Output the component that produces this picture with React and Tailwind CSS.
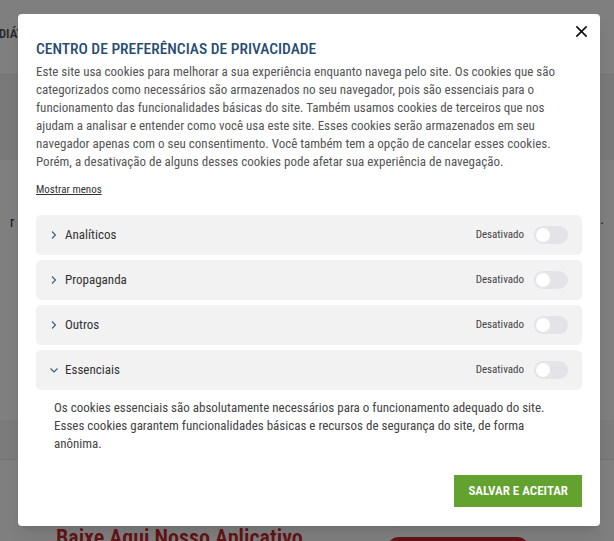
import { useState } from 'react';

const font = { fontFamily: '"Liberation Sans Narrow", "Roboto Condensed", Roboto, sans-serif' };

const categories = [
  { name: 'Analíticos', open: false },
  { name: 'Propaganda', open: false },
  { name: 'Outros', open: false },
  { name: 'Essenciais', open: true },
];

function Chevron({ open }) {
  return open ? (
    <svg width="10" height="10" viewBox="0 0 10 10" className="text-[#3d5a7a]">
      <path d="M1.5 3.5 L5 7 L8.5 3.5" fill="none" stroke="currentColor" strokeWidth="1.1" />
    </svg>
  ) : (
    <svg width="10" height="10" viewBox="0 0 10 10" className="text-[#3d5a7a]">
      <path d="M3 1.5 L6.5 5 L3 8.5" fill="none" stroke="currentColor" strokeWidth="1.1" />
    </svg>
  );
}

function Toggle() {
  const [on, setOn] = useState(false);
  return (
    <button
      onClick={() => setOn(!on)}
      className={`w-[34px] h-[18px] rounded-full p-[2px] flex ${on ? 'bg-[#63a22f] justify-end' : 'bg-[#e3e3e8] justify-start'}`}
    >
      <span className="w-[14px] h-[14px] rounded-full bg-white block" />
    </button>
  );
}

function Background() {
  return (
    <div className="w-full h-[541px] flex flex-col bg-white" style={font}>
      <div className="h-[75px] bg-white flex items-start border-b border-[#e5e5e5]">
        <span className="mt-[24px] text-[13px] text-[#555] ml-[-15px] font-semibold">PEDIÁTRICO</span>
      </div>
      <div className="h-[85px] bg-[#f3f3f3]" />
      <div className="h-[185px] bg-white flex items-start justify-between px-[10px] pt-[52px]">
        <span className="text-[14px] text-[#333]">r</span>
        <span className="text-[14px] text-[#333] mt-[-3px]">a.</span>
      </div>
      <div className="h-[75px] bg-white" />
      <div className="h-[40px] bg-[#f7f7f7] border-b border-[#e5e5e5]" />
      <div className="flex-1 bg-white flex justify-between items-end pl-[56px] pr-[86px]">
        <span className="text-[22px] font-semibold text-[#c8262b] leading-[26px] mb-[-10px]">Baixe Aqui Nosso Aplicativo</span>
        <div className="flex flex-col gap-[6px] items-center mb-[-14px]">
          <div className="w-[132px] h-[10px] border-t-[3px] border-[#c8262b] rounded-t-[6px]" />
          <div className="w-[140px] h-[18px] bg-[#c8262b] rounded-t-[10px]" />
        </div>
      </div>
    </div>
  );
}

export default function App() {
  return (
    <div className="relative w-[614px] h-[541px] overflow-hidden">
      <Background />
      <div className="absolute inset-0 bg-black/50">
        <div className="relative ml-[18px] mt-[14px] w-[582px] bg-white rounded-[4px] shadow-lg px-[18px] pt-[25px] pb-[19px] flex flex-col" style={font}>
          <button className="absolute top-[11px] right-[12px] text-[#111]">
            <svg width="13" height="13" viewBox="0 0 14 14">
              <path d="M2 2 L12 12 M12 2 L2 12" stroke="currentColor" strokeWidth="1.8" strokeLinecap="round" />
            </svg>
          </button>
          <h2 className="text-[15.5px] leading-[20px] text-[#274c72] font-medium">
            CENTRO DE PREFERÊNCIAS DE PRIVACIDADE
          </h2>
          <p className="mt-[4px] text-[13px] leading-[18px] text-[#555]">
            Este site usa cookies para melhorar a sua experiência enquanto navega pelo site. Os cookies que são categorizados como necessários são armazenados no seu navegador, pois são essenciais para o funcionamento das funcionalidades básicas do site. Também usamos cookies de terceiros que nos ajudam a analisar e entender como você usa este site. Esses cookies serão armazenados em seu navegador apenas com o seu consentimento. Você também tem a opção de cancelar esses cookies. Porém, a desativação de alguns desses cookies pode afetar sua experiência de navegação.
          </p>
          <button className="self-start mt-[12px] text-[11px] leading-[14px] text-[#333] underline">Mostrar menos</button>
          <div className="mt-[18px] flex flex-col gap-[5px]">
            {categories.map((c) => (
              <div key={c.name}>
                <div className="h-[40px] bg-[#f2f2f2] rounded-[5px] pl-[13px] pr-[14px] flex items-center">
                  <Chevron open={c.open} />
                  <span className="ml-[6px] text-[13px] text-[#333]">{c.name}</span>
                  <span className="ml-auto text-[11px] text-[#444]">Desativado</span>
                  <span className="ml-[10px] flex"><Toggle /></span>
                </div>
                {c.open && (
                  <p className="pl-[18px] pr-[18px] mt-[9px] text-[13px] leading-[18px] text-[#444]">
                    Os cookies essenciais são absolutamente necessários para o funcionamento adequado do site. Esses cookies garantem funcionalidades básicas e recursos de segurança do site, de forma anônima.
                  </p>
                )}
              </div>
            ))}
          </div>
          <button className="self-end mt-[22px] h-[32px] px-[14px] bg-[#63a22f] text-white text-[13px] font-semibold">
            SALVAR E ACEITAR
          </button>
        </div>
      </div>
    </div>
  );
}
